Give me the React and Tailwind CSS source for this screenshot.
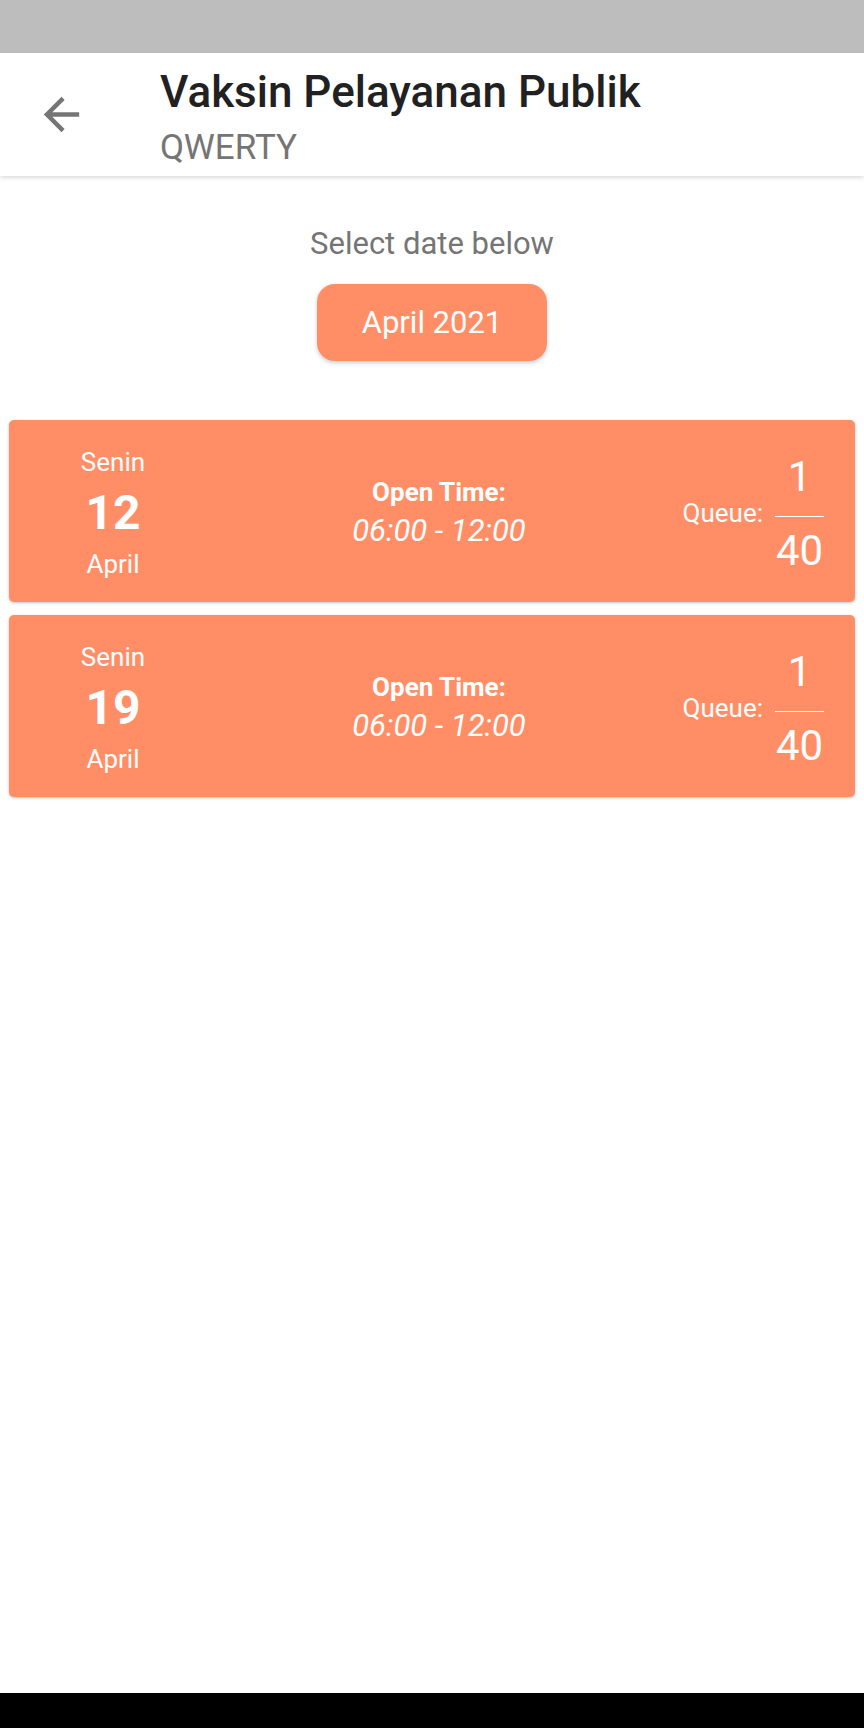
import React from 'react';

const DATES = [
  { day: 'Senin', date: '12', month: 'April', open: '06:00 - 12:00', queue: 1, total: 40 },
  { day: 'Senin', date: '19', month: 'April', open: '06:00 - 12:00', queue: 1, total: 40 },
];

function BackArrow() {
  return (
    <svg viewBox="0 0 24 24" className="w-[53px] h-[53px]" fill="#757575">
      <path d="M20 11H7.83l5.59-5.59L12 4l-8 8 8 8 1.41-1.41L7.83 13H20v-2z" />
    </svg>
  );
}

function DateCard({ item }) {
  return (
    <div className="flex h-[182px] items-center rounded-[5px] bg-[#ff8e66] pt-[4px] text-white shadow-[0_1px_3px_rgba(0,0,0,0.25)]">
      {/* Day / date / month */}
      <div className="flex w-[208px] flex-col items-center gap-[8px]">
        <span className="text-[26px] leading-[30px]">{item.day}</span>
        <span className="text-[48px] font-bold leading-[56px]">{item.date}</span>
        <span className="text-[26px] leading-[30px]">{item.month}</span>
      </div>

      {/* Open time */}
      <div className="flex flex-1 flex-col items-center gap-[6px] pb-[2px] pl-[4px]">
        <span className="text-[26px] font-bold leading-[30px]">Open Time:</span>
        <span className="text-[31px] italic leading-[35px]">{item.open}</span>
      </div>

      {/* Queue */}
      <div className="flex w-[198px] items-center justify-end gap-[12px] pr-[31px]">
        <span className="text-[26px] leading-[30px]">Queue:</span>
        <div className="flex w-[49px] flex-col items-center">
          <span className="text-[42px] leading-[47px]">{item.queue}</span>
          <div className="mb-[10px] mt-[16px] h-px w-full bg-white" />
          <span className="text-[42px] leading-[47px]">{item.total}</span>
        </div>
      </div>
    </div>
  );
}

export default function App() {
  return (
    <div className="flex h-[1728px] w-[864px] flex-col bg-white font-['Roboto',sans-serif]">
      {/* Status bar */}
      <div className="h-[53px] bg-[#bdbdbd]" />

      {/* Toolbar */}
      <div className="relative z-10 flex h-[123px] bg-white shadow-[0_2px_4px_rgba(0,0,0,0.14)]">
        <div className="flex items-center pl-[35px]">
          <BackArrow />
        </div>
        <div className="ml-[72px] flex flex-col pt-[14px]">
          <span className="text-[44px] font-medium leading-[51px] text-[#212121]">Vaksin Pelayanan Publik</span>
          <span className="mt-[9px] text-[35px] leading-[41px] text-[#757575]">QWERTY</span>
        </div>
      </div>

      {/* Content */}
      <div className="flex flex-1 flex-col">
        <div className="flex flex-col items-center pt-[50px]">
          <span className="text-[31px] leading-[36px] text-[#757575]">Select date below</span>
          <button className="mt-[22px] h-[77px] w-[230px] rounded-[18px] bg-[#ff8e66] pt-[2px] text-[31px] text-white shadow-[0_2px_4px_rgba(0,0,0,0.2)]">
            April 2021
          </button>
        </div>

        <div className="mt-[59px] flex flex-col gap-[13px] px-[9px]">
          {DATES.map((item) => (
            <DateCard key={item.date} item={item} />
          ))}
        </div>
      </div>

      {/* Navigation bar */}
      <div className="h-[35px] bg-black" />
    </div>
  );
}
